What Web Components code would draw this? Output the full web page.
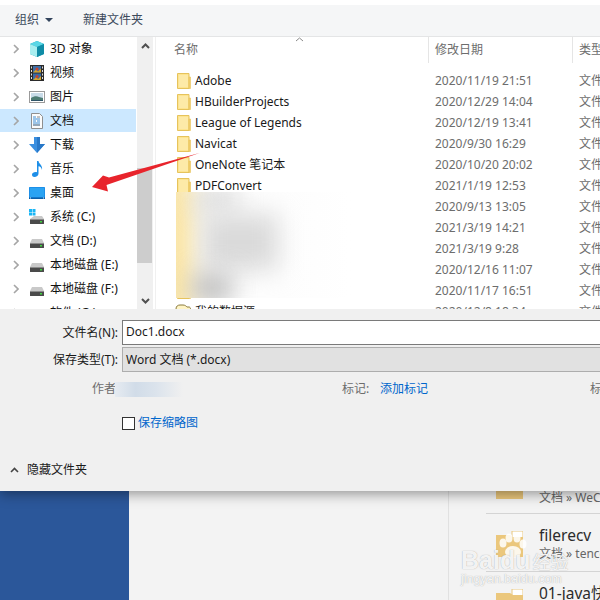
<!DOCTYPE html>
<html lang="zh">
<head>
<meta charset="utf-8">
<title>另存为</title>
<style>
    html, body { margin: 0; height: 100%; }
    body {
        width: 600px;
        height: 600px;
        overflow: hidden;
        position: relative;
        display: flex;
        flex-direction: column;
        background: #fff;
        font: 12px/16px "Noto Sans", "Noto Sans CJK SC", sans-serif;
        color: #1a1a1a;
    }
</style>
</head>
<body>
<save-dialog>
    <dialog-toolbar></dialog-toolbar>
    <browser-pane>
        <nav-pane>
            <nav-row icon="cube">3D 对象</nav-row>
            <nav-row icon="film">视频</nav-row>
            <nav-row icon="picture">图片</nav-row>
            <nav-row icon="doc" selected>文档</nav-row>
            <nav-row icon="down">下载</nav-row>
            <nav-row icon="music">音乐</nav-row>
            <nav-row icon="desktop">桌面</nav-row>
            <nav-row icon="sysdrive">系统 (C:)</nav-row>
            <nav-row icon="drive">文档 (D:)</nav-row>
            <nav-row icon="drive">本地磁盘 (E:)</nav-row>
            <nav-row icon="drive">本地磁盘 (F:)</nav-row>
            <nav-row icon="drive">软件 (G:)</nav-row>
        </nav-pane>
        <file-list>
            <file-row date="2020/11/19 21:51">Adobe</file-row>
            <file-row date="2020/12/29 14:04">HBuilderProjects</file-row>
            <file-row date="2020/12/19 13:41">League of Legends</file-row>
            <file-row date="2020/9/30 16:29">Navicat</file-row>
            <file-row date="2020/10/20 20:02">OneNote 笔记本</file-row>
            <file-row date="2021/1/19 12:53">PDFConvert</file-row>
            <file-row date="2020/9/13 13:05"></file-row>
            <file-row date="2021/3/19 14:21"></file-row>
            <file-row date="2021/3/19 9:28"></file-row>
            <file-row date="2020/12/16 11:07"></file-row>
            <file-row date="2020/11/17 16:51"></file-row>
            <file-row date="2020/12/8 18:34" open>我的数据源</file-row>
        </file-list>
    </browser-pane>
    <save-form></save-form>
</save-dialog>
<back-window></back-window>
<red-arrow></red-arrow>
<baidu-mark></baidu-mark>

<script>
const ICONS = {
    cube: `<svg viewBox="0 0 16 16" width="16" height="16"><path d="M8 0l7 3v10l-7 3-7-3V3z" fill="#1ba6bd"/><path d="M8 0l7 3-7 3-7-3z" fill="#5ad7e6"/><path d="M1 3l7 3v10l-7-3z" fill="#a8eef0"/><path d="M8 6l7-3v10l-7 3z" fill="#0f8ca6"/></svg>`,
    film: `<svg viewBox="0 0 16 16" width="16" height="16"><rect x="1" y="0" width="14" height="16" fill="#2b2b2b"/><rect x="4" y="1" width="8" height="6.5" fill="#3e6fa8"/><rect x="4" y="8.5" width="8" height="6.5" fill="#386aa6"/><path d="M4 7.5l3-3 2 2 3-3v4zM4 15l3-3 2 2 3-3v4z" fill="#d2a32b"/><circle cx="8" cy="4" r="1.5" fill="#c9432c"/><circle cx="8" cy="11.5" r="1.5" fill="#c9432c"/><path d="M2 1.5h1v2H2zM2 5h1v2H2zM2 8.5h1v2H2zM2 12h1v2H2zM13 1.5h1v2h-1zM13 5h1v2h-1zM13 8.5h1v2h-1zM13 12h1v2h-1z" fill="#ddd"/></svg>`,
    picture: `<svg viewBox="0 0 16 16" width="16" height="16"><rect x=".5" y="2.5" width="15" height="11" fill="#fff" stroke="#9a9a9a"/><rect x="2" y="4" width="12" height="8" fill="#c8dbe8"/><path d="M2 9c3-2 6-2 8-1l4 1v3H2z" fill="#4d7c73"/><path d="M2 11h12v1H2z" fill="#2f5568"/></svg>`,
    doc: `<svg viewBox="0 0 16 16" width="16" height="16"><path d="M2.500.5h8l3 3v12h-11z" fill="#fbfbfb" stroke="#8f8f8f"/><path d="M4 4h3M4 6h7M4 8h3M8 8h3M4 10h7M4 12h7" stroke="#3f8fd6" fill="none"/><path d="M8 4h3M4 12h7" stroke="#8a8a8a" fill="none"/></svg>`,
    down: `<svg viewBox="0 0 16 16" width="16" height="16"><path d="M5 0h6v7h5l-8 9-8-9h5z" fill="#3a8fe0"/><path d="M8 0h3v7h5l-8 9z" fill="#2878c8"/></svg>`,
    music: `<svg viewBox="0 0 16 16" width="16" height="16"><path d="M8 0h1.500c.2 3 4.500 4 3.500 9-.3-2.500-2-3.500-3.500-3.800V12.500C9.500 14.800 7.500 16 5.500 16S3 14.800 3 13.500 4.800 11 6.500 11c.6 0 1.100.1 1.500.3z" fill="#1e8fe8"/></svg>`,
    desktop: `<svg viewBox="0 0 16 16" width="16" height="16"><rect x="0" y="2" width="16" height="12" rx=".5" fill="#1c8fe8"/><path d="M1 3h14v9H1z" fill="#2ba3f2"/><path d="M0 12.500h16V14H0z" fill="#0c5fa8"/><path d="M1 13h1M14 13h1" stroke="#cfe8fa"/></svg>`,
    drive: `<svg viewBox="0 0 16 16" width="16" height="16"><path d="M3 6h10l2 4H1z" fill="#c9c9c9"/><rect x="1" y="10" width="14" height="5" rx=".5" fill="#4a4a4a"/><rect x="1" y="10" width="14" height="1" fill="#8b8b8b"/><rect x="11" y="12" width="2" height="1.500" fill="#3fd43f"/></svg>`,
    sysdrive: `<svg viewBox="0 0 16 16" width="16" height="16"><path d="M0 0h3v3H0zM3.500 0h3v3h-3zM0 3.500h3v3H0zM3.500 3.500h3v3h-3z" fill="#19b5f5"/><path d="M5 7h8l2 3H1z" fill="#c9c9c9"/><rect x="1" y="10" width="14" height="5" rx=".5" fill="#4a4a4a"/><rect x="1" y="10" width="14" height="1" fill="#8b8b8b"/><rect x="11" y="12" width="2" height="1.500" fill="#3fd43f"/></svg>`,
};

const FOLDER = `<svg viewBox="0 0 14 16" width="14" height="16"><path d="M.5.500h11.500v15H.5z" fill="#fde48f" stroke="#e6c35c"/><path d="M12 4h1.500v11.500H12z" fill="#f3cf6d" stroke="#e6c35c" stroke-width=".6"/><path d="M2 2h9v12H2z" fill="#fdeaa8"/></svg>`;
const OPEN_FOLDER = `<svg viewBox="0 0 16 16" width="16" height="16" style="margin-left:-2px"><path d="M1 5c0-3 2-4 4-4h3c2 0 3 1 4 2h2c1 0 1.500 1 1.500 2v9H1z" fill="#fff4c4" stroke="#8a7a3c"/><path d="M1 6h14.500" stroke="#e6c35c"/></svg>`;

class SaveDialog extends HTMLElement {
    constructor() {
        super();
        this.attachShadow({ mode: 'open' }).innerHTML = `
            <style>
                :host {
                    display: flex;
                    flex-direction: column;
                    height: 491px;
                    flex: none;
                    padding-top: 5px;
                    box-sizing: border-box;
                    background: #fff;
                    position: relative;
                    z-index: 1;
                    box-shadow: 0 3px 12px rgba(0, 0, 0, 0.4);
                }
            </style>
            <slot></slot>`;
    }
}

class DialogToolbar extends HTMLElement {
    constructor() {
        super();
        this.attachShadow({ mode: 'open' }).innerHTML = `
            <style>
                :host {
                    display: flex;
                    align-items: center;
                    height: 32px;
                    box-sizing: border-box;
                    padding: 0 0 1px 15px;
                    background: #f5f6f7;
                    border-bottom: 1px solid #e4e5e6;
                    color: #3c4a5c;
                    flex: none;
                }
                .caret {
                    width: 0;
                    height: 0;
                    margin: 0 30px 0 6px;
                    border: 4px solid transparent;
                    border-top: 4px solid #33445c;
                    border-bottom: 0;
                }
            </style>
            <span>组织</span><span class="caret"></span><span>新建文件夹</span>`;
    }
}

class BrowserPane extends HTMLElement {
    constructor() {
        super();
        this.attachShadow({ mode: 'open' }).innerHTML = `
            <style>
                :host { display: flex; height: 272px; flex: none; overflow: hidden; background: #fff; }
            </style>
            <slot></slot>`;
    }
}

class NavPane extends HTMLElement {
    constructor() {
        super();
        this.attachShadow({ mode: 'open' }).innerHTML = `
            <style>
                :host { display: flex; width: 153px; flex: none; }
                .rows { width: 136px; margin-right: 1px; flex: none; display: flex; flex-direction: column; overflow: hidden; }
                .bar {
                    width: 16px;
                    background: #f0f0f0;
                    display: flex;
                    flex-direction: column;
                    align-items: flex-start;
                }
                .btn { height: 17px; flex: none; width: 100%; display: flex; align-items: center; justify-content: center; }
                .thumb { width: 15px; height: 95px; margin: 114px 0 29px; background: #cdcdcd; flex: none; }
            </style>
            <div class="rows"><slot></slot></div>
            <div class="bar">
                <div class="btn"><svg width="9" height="6" viewBox="0 0 9 6"><path d="M1 5l3.500-3.500L8 5" fill="none" stroke="#505050" stroke-width="2"/></svg></div>
                <div class="thumb"></div>
                <div class="btn"><svg width="9" height="6" viewBox="0 0 9 6"><path d="M1 1l3.500 3.500L8 1" fill="none" stroke="#505050" stroke-width="2"/></svg></div>
            </div>`;
    }
}

class NavRow extends HTMLElement {
    constructor() {
        super();
        this.attachShadow({ mode: 'open' });
    }
    connectedCallback() {
        this.shadowRoot.innerHTML = `
            <style>
                :host {
                    display: flex;
                    align-items: center;
                    height: 24px;
                    flex: none;
                    box-sizing: border-box;
                    padding: 0 0 1px 13px;
                    white-space: nowrap;
                    color: #111;
                }
                :host([selected]) { background: linear-gradient(#cce8ff 23px, #fff 23px); }
                .chev { width: 16px; flex: none; display: flex; }
                .icon { width: 16px; height: 16px; flex: none; margin-right: 5px; }
                svg { display: block; }
            </style>
            <span class="chev"><svg width="6" height="10" viewBox="0 0 6 10"><path d="M1 1l4 4-4 4" fill="none" stroke="#a6a6a6" stroke-width="1.600"/></svg></span>
            <span class="icon">${ICONS[this.getAttribute('icon')]}</span>
            <slot></slot>`;
    }
}

class FileList extends HTMLElement {
    constructor() {
        super();
        this.attachShadow({ mode: 'open' }).innerHTML = `
            <style>
                :host {
                    display: block;
                    flex: 1;
                    min-width: 0;
                    position: relative;
                    margin-left: 2px;
                    border-left: 1px solid #f0f0f0;
                    color: #6d6d6d;
                }
                .head { display: grid; grid-template-columns: 272px 144px 1fr; height: 26px; }
                .head div { padding: 5px 0 0 18px; white-space: nowrap; overflow: hidden; }
                .head div + div { padding-left: 6px; border-left: 1px solid #e5e5e5; }
                .rows { padding-top: 7px; display: flex; flex-direction: column; }
                .sort { position: absolute; left: 139px; top: 0; }
                /* blurred out names, as in the shot */
                .smear {
                    position: absolute;
                    left: 20px;
                    top: 155px;
                    width: 175px;
                    height: 106px;
                    overflow: hidden;
                    background: linear-gradient(90deg, #fdfdfd 60%, #fff);
                }
                .smear i { position: absolute; display: block; filter: blur(12px); }
            </style>
            <div class="head"><div>名称</div><div>修改日期</div><div>类型</div></div>
            <svg class="sort" width="9" height="5" viewBox="0 0 9 5"><path d="M1 4l3.500-3L8 4" fill="none" stroke="#8a8a8a"/></svg>
            <div class="rows"><slot></slot></div>
            <div class="smear">
                <i style="left:-18px;top:-20px;width:36px;height:150px;background:#fbe4a0;"></i>
                <i style="left:18px;top:-4px;width:44px;height:24px;background:#dcdcdc;"></i>
                <i style="left:26px;top:22px;width:76px;height:56px;background:#dadada;"></i>
                <i style="left:16px;top:82px;width:40px;height:28px;background:#bcbcbc;"></i>
            </div>`;
    }
}

class FileRow extends HTMLElement {
    constructor() {
        super();
        this.attachShadow({ mode: 'open' });
    }
    connectedCallback() {
        this.shadowRoot.innerHTML = `
            <style>
                :host {
                    display: grid;
                    grid-template-columns: 272px 144px 1fr;
                    height: 21px;
                    flex: none;
                    align-items: center;
                    white-space: nowrap;
                }
                .name { display: flex; align-items: center; gap: 4px; padding-left: 21px; color: #1a1a1a; }
                svg { display: block; flex: none; }
                .date, .kind { padding-left: 7px; }
            </style>
            <div class="name">${this.hasAttribute('open') ? OPEN_FOLDER : FOLDER}<slot></slot></div>
            <div class="date">${this.getAttribute('date')}</div>
            <div class="kind">文件夹</div>`;
    }
}

class SaveForm extends HTMLElement {
    constructor() {
        super();
        this.attachShadow({ mode: 'open' }).innerHTML = `
            <style>
                :host {
                    display: flex;
                    flex-direction: column;
                    flex: 1;
                    background: #f0f0f0;
                    padding-top: 11px;
                    color: #1a1a1a;
                }
                .field { display: flex; align-items: center; height: 25px; margin-bottom: 2px; white-space: nowrap; }
                .field label { width: 118px; margin-right: 4px; text-align: right; flex: none; }
                .box { flex: 1; height: 25px; box-sizing: border-box; padding: 3px 0 0 3px; border: 1px solid #7a7a7a; border-right: 0; background: #fff; }
                .box.type { background: #e1e1e1; border-color: #adadad; padding-top: 4px; }
                .meta { display: flex; align-items: center; height: 16px; margin-top: 7px; color: #6d6d6d; white-space: nowrap; overflow: hidden; }
                .who { margin-left: 92px; width: 23px; flex: none; }
                .smear { width: 68px; height: 15px; margin-top: 1px; flex: none; background: linear-gradient(90deg, #e6ebf1, #d1dce8 30%, #dbe3ec 60%, #f0f0f0); }
                .tag { margin-left: 159px; width: 38px; flex: none; }
                a { color: #0066cc; text-decoration: none; }
                .more { margin-left: 162px; }
                .thumb { display: flex; align-items: center; margin: 18px 0 0 122px; height: 16px; }
                .check { width: 13px; height: 13px; box-sizing: border-box; border: 1px solid #333; background: #fff; margin-right: 3px; flex: none; }
                .hide { display: flex; align-items: center; gap: 8px; margin: 31px 0 0 10px; height: 16px; }
                svg { display: block; }
            </style>
            <div class="field"><label>文件名(N):</label><div class="box">Doc1.docx</div></div>
            <div class="field"><label>保存类型(T):</label><div class="box type">Word 文档 (*.docx)</div></div>
            <div class="meta">
                <span class="who">作者</span><span class="smear"></span>
                <span class="tag">标记:</span><a>添加标记</a>
                <span class="more">标题</span>
            </div>
            <div class="thumb"><span class="check"></span><a>保存缩略图</a></div>
            <div class="hide">
                <svg width="9" height="6" viewBox="0 0 9 6"><path d="M1 5l3.500-3.500L8 5" fill="none" stroke="#444" stroke-width="1.600"/></svg>
                <span>隐藏文件夹</span>
            </div>`;
    }
}

class BackWindow extends HTMLElement {
    constructor() {
        super();
        this.attachShadow({ mode: 'open' }).innerHTML = `
            <style>
                :host { display: flex; flex: 1; min-height: 0; overflow: hidden; background: #f3f3f3; }
                .blue { width: 129px; flex: none; background: #2b579a; }
                .mid { width: 319px; flex: none; border-right: 1px solid #e1e1e1; }
                .right { flex: 1; min-width: 0; margin: -35px 0 0 37px; }
            </style>
            <div class="blue"></div>
            <div class="mid"></div>
            <div class="right">
                <recent-item name="WeChat Files" path="文档 » WeChat Files"></recent-item>
                <recent-item name="filerecv" path="文档 » tencent files"></recent-item>
                <recent-item name="01-java快速入门" path="文档 » java"></recent-item>
            </div>`;
    }
}

class RecentItem extends HTMLElement {
    constructor() {
        super();
        this.attachShadow({ mode: 'open' });
    }
    connectedCallback() {
        this.shadowRoot.innerHTML = `
            <style>
                :host {
                    display: flex;
                    height: 58px;
                    box-sizing: border-box;
                    padding: 11px 0 0 10px;
                    gap: 16px;
                    border-bottom: 1px solid #d4d4d4;
                    white-space: nowrap;
                    overflow: hidden;
                }
                :host(:first-child) { padding-top: 13px; }
                svg { display: block; flex: none; margin-top: 6px; }
                :host(:first-child) svg { margin-top: 4px; }
                .name { font-size: 15.5px; line-height: 20px; color: #2b2b2b; }
                .path { line-height: 18px; color: #666; }
            </style>
            <svg width="27" height="26" viewBox="0 0 27 26"><path d="M16 0h11v8H16z" fill="#fff" stroke="#e8c67d"/><path d="M0 4h14l3 2h10v20H0z" fill="#ebc77c"/></svg>
            <div><div class="name">${this.getAttribute('name')}</div><div class="path">${this.getAttribute('path')}</div></div>`;
    }
}

class RedArrow extends HTMLElement {
    constructor() {
        super();
        this.attachShadow({ mode: 'open' }).innerHTML = `
            <style>
                :host { position: absolute; left: 85px; top: 148px; width: 120px; height: 50px; z-index: 2; }
                svg { display: block; }
            </style>
            <svg width="120" height="50" viewBox="85 148 120 50"><path d="M199.500 153L109 177.500 103 175.500 92 187 108 191.500 106.500 185z" fill="#e8242c"/></svg>`;
    }
}

class BaiduMark extends HTMLElement {
    constructor() {
        super();
        this.attachShadow({ mode: 'open' }).innerHTML = `
            <style>
                :host {
                    position: absolute;
                    left: 461px;
                    top: 533px;
                    width: 110px;
                    height: 54px;
                    z-index: 2;
                    color: rgba(255, 255, 255, 0.9);
                    font-family: "Liberation Sans", "Noto Sans CJK SC", sans-serif;
                    text-shadow: 0 0 1px rgba(120, 120, 120, 0.7);
                    white-space: nowrap;
                }
                svg { position: absolute; left: 35px; top: 0; }
                .big { position: absolute; left: 0; top: 15px; font-size: 25px; line-height: 24px; font-weight: bold; }
                .big span { margin-left: 2px; font-size: 18px; font-weight: normal; }
                .small { position: absolute; left: 0; top: 39px; font-size: 12.5px; line-height: 14px; }
            </style>
            <svg width="32" height="26" viewBox="0 0 32 26" fill="rgba(255,255,255,.85)"><ellipse cx="7" cy="10" rx="3.500" ry="4.500"/><ellipse cx="13" cy="5" rx="3.500" ry="4.500"/><ellipse cx="21" cy="5" rx="3.500" ry="4.500"/><ellipse cx="27" cy="11" rx="3.500" ry="4.500"/><ellipse cx="17" cy="19" rx="8" ry="6"/></svg>
            <div class="big">Baidu<span>经验</span></div>
            <div class="small">jingyan.baidu.com</div>`;
    }
}

customElements.define('save-dialog', SaveDialog);
customElements.define('dialog-toolbar', DialogToolbar);
customElements.define('browser-pane', BrowserPane);
customElements.define('nav-pane', NavPane);
customElements.define('nav-row', NavRow);
customElements.define('file-list', FileList);
customElements.define('file-row', FileRow);
customElements.define('save-form', SaveForm);
customElements.define('back-window', BackWindow);
customElements.define('recent-item', RecentItem);
customElements.define('red-arrow', RedArrow);
customElements.define('baidu-mark', BaiduMark);
</script>
</body>
</html>
